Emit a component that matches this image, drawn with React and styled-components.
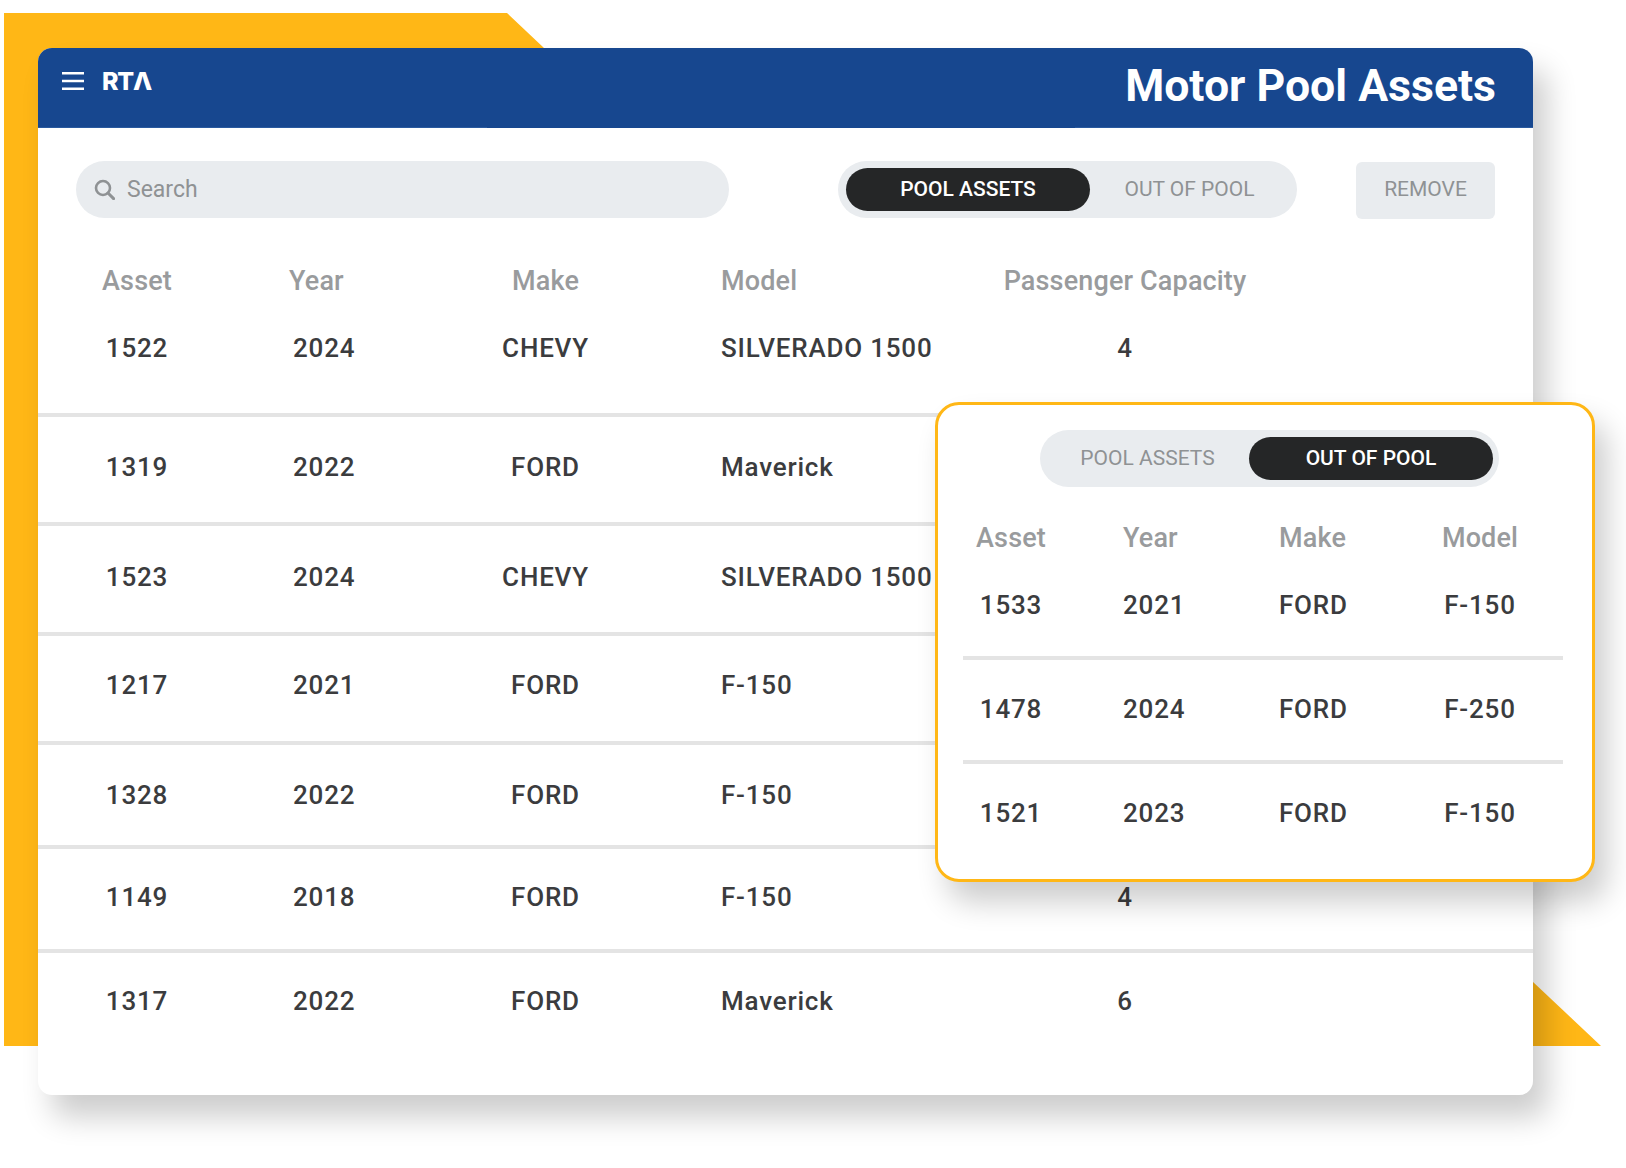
import React from "react";
import styled, { createGlobalStyle } from "styled-components";

const Global = createGlobalStyle`
  html, body { margin: 0; padding: 0; background: #fff; }
  body { font-family: Roboto, "Liberation Sans", sans-serif; overflow: hidden; }
  * { box-sizing: border-box; }
`;

const Stage = styled.div`
  position: relative;
  width: 1626px;
  height: 1168px;
  padding: 48px 0 0 38px;
  overflow: hidden;
`;

const Backdrop = styled.div`
  position: absolute;
  inset: 0;
  background: #ffb716;
  clip-path: polygon(4px 13px, 507px 13px, 544px 48px, 544px 100px, 1497px 100px, 1497px 948px, 1601px 1046px, 4px 1046px);
`;

const Card = styled.main`
  position: relative;
  width: 1495px;
  height: 1047px;
  background: #fff;
  border-radius: 14px;
  box-shadow: 14px 22px 30px rgba(0, 0, 0, 0.2);
`;

const Header = styled.header`
  height: 80px;
  display: flex;
  align-items: flex-start;
  justify-content: space-between;
  padding: 0 37px 0 24px;
  background:
    linear-gradient(to right, #2a5a9f 0 449px, transparent 449px 1037px, #2a5a9f 1037px) bottom / 100% 1px no-repeat,
    #17478f;
  border-radius: 14px 14px 0 0;
`;

const Brand = styled.div`
  display: flex;
  align-items: center;
  gap: 18px;
  height: 18px;
  margin-top: 24px;
`;

const Burger = styled.svg`
  width: 22px;
  height: 18px;
  display: block;
`;

const Logo = styled.span`
  font-family: Inter, Roboto, sans-serif;
  font-size: 25px;
  font-weight: 800;
  line-height: 18px;
  letter-spacing: -1.2px;
  color: #fff;
`;

const Title = styled.h1`
  margin: 12px 0 0;
  font-size: 44.6px;
  line-height: 52px;
  font-weight: 700;
  color: #fff;
`;

const Toolbar = styled.div`
  display: flex;
  align-items: flex-start;
  padding: 33px 38px 0 38px;
`;

const Search = styled.div`
  width: 653px;
  height: 57px;
  display: flex;
  align-items: center;
  gap: 12px;
  padding-left: 18px;
  background: #e9ecef;
  border-radius: 29px;
`;

const SearchIcon = styled.svg`
  width: 21px;
  height: 21px;
  flex: none;
`;

const SearchText = styled.span`
  font-size: 23px;
  color: #8f9294;
`;

const Toggle = styled.div`
  width: 459px;
  height: 57px;
  flex: none;
  display: flex;
  align-items: center;
  padding: 0 ${(p) => p.$inset}px;
  margin-left: ${(p) => p.$offset}px;
  background: #e9ecef;
  border-radius: 29px;
`;

const Tab = styled.span`
  height: 43px;
  border-radius: 22px;
  display: flex;
  align-items: center;
  justify-content: center;
  padding-bottom: 1px;
  font-size: 21px;
  font-weight: ${(p) => (p.$active ? 500 : 400)};
  flex: ${(p) => (p.$active ? "0 0 244px" : "1 1 0")};
  background: ${(p) => (p.$active ? "#252627" : "transparent")};
  color: ${(p) => (p.$active ? "#fff" : "#8f9294")};
`;

const RemoveButton = styled.button`
  width: 139px;
  height: 57px;
  margin: 1px 0 0 59px;
  border: 0;
  border-radius: 6px;
  background: #e9ecef;
  font-family: inherit;
  font-size: 21px;
  color: #8f9294;
  padding: 0 0 4px;
`;

const mainCols = "198px 184px 251px 329px 250px";
const popCols = "96px 220px 121px 160px";

const Grid = styled.div`
  display: grid;
  grid-template-columns: ${(p) => (p.$pop ? popCols : mainCols)};
  align-items: start;
  height: ${(p) => p.$h}px;
  padding-top: ${(p) => p.$top}px;
  border-bottom: ${(p) => (p.$line ? "4px solid #e4e4e4" : "0")};
`;

const Head = styled.span`
  font-size: 27px;
  line-height: 32px;
  font-weight: 500;
  color: #999b9d;
  text-align: ${(p) => p.$align || "left"};
  padding-left: ${(p) => p.$indent || 0}px;
  letter-spacing: 0.15px;
`;

const Value = styled.span`
  font-size: 26px;
  line-height: 32px;
  font-weight: 500;
  color: #3b3c3e;
  text-align: ${(p) => p.$align || "left"};
  padding-left: ${(p) => p.$indent || 0}px;
  letter-spacing: 0.8px;
  white-space: nowrap;
`;

const Popup = styled.aside`
  position: absolute;
  left: 897px;
  top: 354px;
  width: 660px;
  height: 480px;
  background: #fff;
  border: 3.5px solid #ffb716;
  border-radius: 24px;
  box-shadow: 12px 20px 30px rgba(0, 0, 0, 0.2);
  padding-top: 25px;
`;

const PopBody = styled.div`
  margin: 0 0 0 25px;
  width: 600px;
`;

const mainCells = [
  { align: "center" },
  { indent: 57 },
  { align: "center" },
  { indent: 50 },
  { align: "center" },
];
const mainHeads = [
  { t: "Asset", align: "center" },
  { t: "Year", indent: 53 },
  { t: "Make", align: "center" },
  { t: "Model", indent: 50 },
  { t: "Passenger Capacity", align: "center" },
];
const rows = [
  { h: 104, top: 19, v: ["1522", "2024", "CHEVY", "SILVERADO 1500", "4"] },
  { h: 109, top: 34, v: ["1319", "2022", "FORD", "Maverick", ""] },
  { h: 110, top: 35, v: ["1523", "2024", "CHEVY", "SILVERADO 1500", ""] },
  { h: 109, top: 33, v: ["1217", "2021", "FORD", "F-150", ""] },
  { h: 104, top: 34, v: ["1328", "2022", "FORD", "F-150", ""] },
  { h: 104, top: 32, v: ["1149", "2018", "FORD", "F-150", "4"] },
  { h: 143, top: 32, last: true, v: ["1317", "2022", "FORD", "Maverick", "6"] },
];

const popHeads = [
  { t: "Asset", align: "center" },
  { t: "Year", indent: 64 },
  { t: "Make" },
  { t: "Model", align: "center" },
];
const popCells = [{ align: "center" }, { indent: 64 }, {}, { align: "center" }];
const popRows = [
  { h: 104, top: 33, v: ["1533", "2021", "FORD", "F-150"] },
  { h: 104, top: 33, v: ["1478", "2024", "FORD", "F-250"] },
  { h: 100, top: 33, last: true, v: ["1521", "2023", "FORD", "F-150"] },
];

export default function App() {
  return (
    <Stage>
      <Global />
      <Backdrop />
      <Card>
        <Header>
          <Brand>
            <Burger viewBox="0 0 22 18">
              <path d="M0 1.3h22M0 9h22M0 16.7h22" stroke="#fff" strokeWidth="2.6" fill="none" />
            </Burger>
            <Logo>RTΛ</Logo>
          </Brand>
          <Title>Motor Pool Assets</Title>
        </Header>
        <Toolbar>
          <Search>
            <SearchIcon viewBox="0 0 21 21">
              <circle cx="9" cy="9" r="7" fill="none" stroke="#8f9294" strokeWidth="2.6" />
              <path d="M14 14l5.6 5.6" stroke="#8f9294" strokeWidth="3" strokeLinecap="round" />
            </SearchIcon>
            <SearchText>Search</SearchText>
          </Search>
          <Toggle $inset={8} $offset={109}>
            <Tab $active>POOL ASSETS</Tab>
            <Tab>OUT OF POOL</Tab>
          </Toggle>
          <RemoveButton>REMOVE</RemoveButton>
        </Toolbar>
        <Grid $h={94} $top={46}>
          {mainHeads.map((c) => (
            <Head key={c.t} $align={c.align} $indent={c.indent}>{c.t}</Head>
          ))}
        </Grid>
        {rows.map((r) => (
          <Grid key={r.v[0]} $h={r.h} $top={r.top} $line={!r.last}>
            {r.v.map((t, i) => (
              <Value key={i} $align={mainCells[i].align} $indent={mainCells[i].indent}>{t}</Value>
            ))}
          </Grid>
        ))}
        <Popup>
          <Toggle $inset={6} $offset={102}>
            <Tab>POOL ASSETS</Tab>
            <Tab $active>OUT OF POOL</Tab>
          </Toggle>
          <PopBody>
            <Grid $pop $h={69} $top={35}>
              {popHeads.map((c) => (
                <Head key={c.t} $align={c.align} $indent={c.indent}>{c.t}</Head>
              ))}
            </Grid>
            {popRows.map((r) => (
              <Grid key={r.v[0]} $pop $h={r.h} $top={r.top} $line={!r.last}>
                {r.v.map((t, i) => (
                  <Value key={i} $align={popCells[i].align} $indent={popCells[i].indent}>{t}</Value>
                ))}
              </Grid>
            ))}
          </PopBody>
        </Popup>
      </Card>
    </Stage>
  );
}
